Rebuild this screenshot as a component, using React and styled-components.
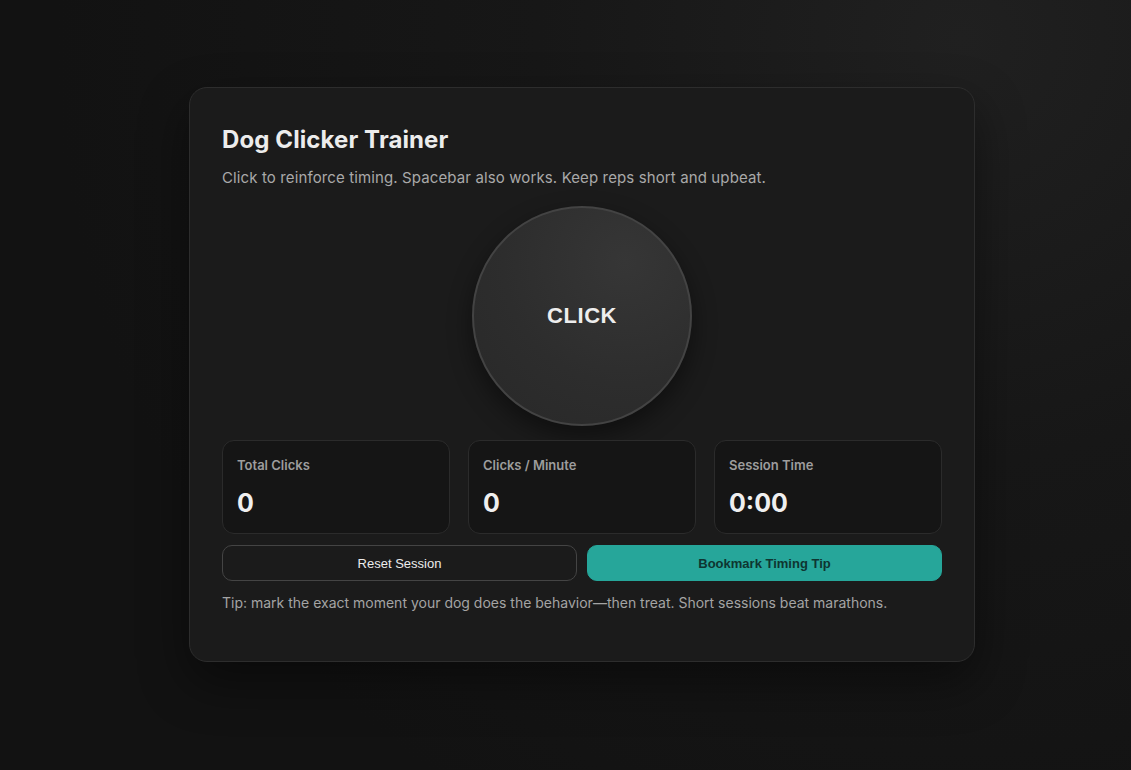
import React, { useState, useEffect } from 'react'
import styled, { createGlobalStyle } from 'styled-components'

const GlobalStyle = createGlobalStyle`
  html, body {
    margin: 0;
    padding: 0;
    background: #131313;
  }
  body {
    font-family: Inter, "Noto Sans", sans-serif;
    color: #ededed;
  }
`

const Page = styled.div`
  min-height: 100vh;
  box-sizing: border-box;
  padding: 87px 0 0 189px;
  background: radial-gradient(circle at 85% 5%, #202020 0%, #171717 35%, #121212 75%);
`

const Card = styled.div`
  width: 786px;
  box-sizing: border-box;
  padding: 32px 32px 48px;
  background: #1b1b1b;
  border: 1px solid #2d2d2d;
  border-radius: 18px;
  box-shadow: 0 20px 50px rgba(0, 0, 0, 0.45);
`

const Title = styled.h1`
  margin: 0;
  font-size: 24px;
  line-height: 40px;
  font-weight: 700;
  color: #ececec;
  letter-spacing: 0.1px;
`

const Subtitle = styled.p`
  margin: 7px 0 0;
  font-size: 15px;
  line-height: 22px;
  color: #a9a9a9;
  letter-spacing: 0.12px;
`

const ClickArea = styled.div`
  display: flex;
  justify-content: center;
  margin-top: 17px;
`

const BigButton = styled.button`
  width: 220px;
  height: 220px;
  border-radius: 50%;
  border: 2px solid #434343;
  background: radial-gradient(circle at 70% 25%, #363636 0%, #2d2d2d 55%, #282828 100%);
  color: #ededed;
  font-family: "Liberation Sans", Arial, sans-serif;
  font-size: 22px;
  font-weight: 700;
  letter-spacing: 0.6px;
  box-shadow: 0 10px 24px rgba(0, 0, 0, 0.45);
  cursor: pointer;
`

const Stats = styled.div`
  display: grid;
  grid-template-columns: repeat(3, 1fr);
  gap: 18px;
  margin-top: 14px;
`

const Stat = styled.div`
  height: 94px;
  box-sizing: border-box;
  padding: 16px 14px;
  background: #151515;
  border: 1px solid #2b2b2b;
  border-radius: 12px;
`

const StatLabel = styled.div`
  font-size: 13px;
  line-height: 16px;
  font-weight: 600;
  color: #9d9d9d;
`

const StatValue = styled.div`
  margin-top: 15px;
  font-size: 25px;
  line-height: 30px;
  font-weight: 700;
  color: #efefef;
`

const Actions = styled.div`
  display: grid;
  grid-template-columns: 1fr 1fr;
  gap: 10px;
  margin-top: 11px;
`

const ActionButton = styled.button`
  height: 36px;
  border-radius: 10px;
  font-family: "Liberation Sans", Arial, sans-serif;
  font-size: 13px;
  cursor: pointer;
  border: 1px solid ${p => (p.$primary ? '#26a69a' : '#444')};
  background: ${p => (p.$primary ? '#26a69a' : '#1b1b1b')};
  color: ${p => (p.$primary ? '#0e3531' : '#ececec')};
  font-weight: ${p => (p.$primary ? 700 : 400)};
`

const Tip = styled.p`
  margin: 12px 0 0;
  font-size: 14px;
  line-height: 20px;
  color: #a4a4a4;
`

function formatTime(s) {
  const m = Math.floor(s / 60)
  const r = s % 60
  return `${m}:${r < 10 ? '0' : ''}${r}`
}

export default function App() {
  const [clicks, setClicks] = useState(0)
  const [seconds] = useState(0)

  useEffect(() => {
    const onKey = e => {
      if (e.code === 'Space') setClicks(c => c + 1)
    }
    window.addEventListener('keydown', onKey)
    return () => window.removeEventListener('keydown', onKey)
  }, [])

  const perMinute = seconds > 0 ? Math.round((clicks / seconds) * 60) : 0

  return (
    <Page>
      <GlobalStyle />
      <Card>
        <Title>Dog Clicker Trainer</Title>
        <Subtitle>Click to reinforce timing. Spacebar also works. Keep reps short and upbeat.</Subtitle>
        <ClickArea>
          <BigButton onClick={() => setClicks(c => c + 1)}>CLICK</BigButton>
        </ClickArea>
        <Stats>
          <Stat>
            <StatLabel>Total Clicks</StatLabel>
            <StatValue>{clicks}</StatValue>
          </Stat>
          <Stat>
            <StatLabel>Clicks / Minute</StatLabel>
            <StatValue>{perMinute}</StatValue>
          </Stat>
          <Stat>
            <StatLabel>Session Time</StatLabel>
            <StatValue>{formatTime(seconds)}</StatValue>
          </Stat>
        </Stats>
        <Actions>
          <ActionButton onClick={() => setClicks(0)}>Reset Session</ActionButton>
          <ActionButton $primary>Bookmark Timing Tip</ActionButton>
        </Actions>
        <Tip>
          Tip: mark the exact moment your dog does the behavior—then treat. Short sessions beat marathons.
        </Tip>
      </Card>
    </Page>
  )
}
